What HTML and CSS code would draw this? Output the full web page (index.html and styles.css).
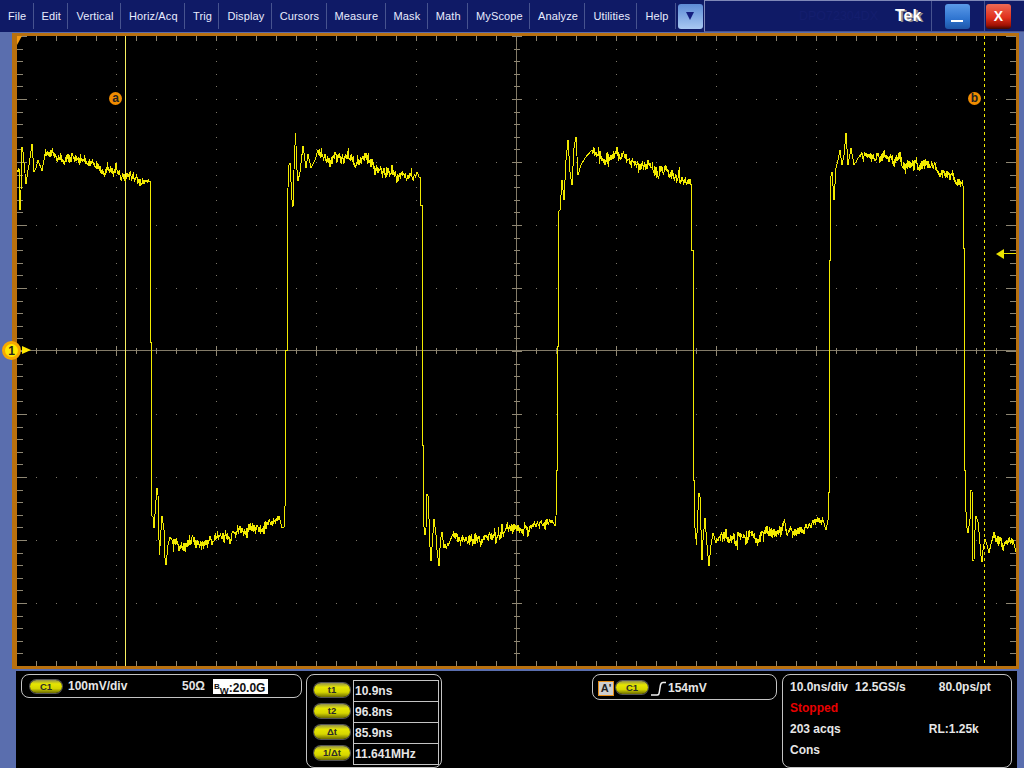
FILE: index.html
```html
<!DOCTYPE html>
<html lang="en">
<head>
    <meta charset="UTF-8">
    <title>Tek DPO72304DX</title>
    <link rel="stylesheet" href="styles.css">
</head>
<body>
    <header class="menubar">
        <ul class="menu">
            <li>File</li>
            <li>Edit</li>
            <li>Vertical</li>
            <li>Horiz/Acq</li>
            <li>Trig</li>
            <li>Display</li>
            <li>Cursors</li>
            <li>Measure</li>
            <li>Mask</li>
            <li>Math</li>
            <li>MyScope</li>
            <li>Analyze</li>
            <li>Utilities</li>
            <li>Help</li>
        </ul>
        <button class="winbtn btn-more"><span class="down-arrow"></span></button>
        <div class="titlebox">
            <span class="model">DPO72304DX</span>
            <span class="brand">Tek</span>
            <div class="winbtn-cell"><button class="winbtn btn-min"><span class="dash"></span></button></div>
            <div class="winbtn-cell last"><button class="winbtn btn-close">X</button></div>
        </div>
    </header>

    <main class="frame">
        <div class="plot">
            <svg id="scope" class="scope" width="999" height="630" viewBox="17 36 999 630"></svg>
            <span class="trig-pos"></span>
            <span class="cursor-tag tag-a">a</span>
            <span class="cursor-tag tag-b">b</span>
            <span class="ch-marker">1</span>
            <span class="ch-arrow"></span>
            <span class="level-arrow"></span>
            <span class="level-line"></span>
        </div>
    </main>

    <footer class="readouts">
        <section class="panel panel-vert">
            <span class="pill">C1</span>
            <span class="vert-scale">100mV/div</span>
            <span class="vert-term">50Ω</span>
            <span class="bw-box"><span class="bw-b">B</span><span class="bw-w">W</span>:20.0G</span>
        </section>

        <section class="panel panel-cursors">
            <div class="cursor-pills">
                <span class="pill pill-wide">t1</span>
                <span class="pill pill-wide">t2</span>
                <span class="pill pill-wide">Δt</span>
                <span class="pill pill-wide">1/Δt</span>
            </div>
            <table class="cursor-table">
                <tr><td>10.9ns</td></tr>
                <tr><td>96.8ns</td></tr>
                <tr><td>85.9ns</td></tr>
                <tr><td>11.641MHz</td></tr>
            </table>
        </section>

        <section class="panel panel-trig">
            <span class="trig-source">A'</span>
            <span class="pill">C1</span>
            <svg class="slope" width="16" height="16" viewBox="0 0 16 16">
                <path d="M0 14H6C8 14 8 13 8.500 10L9.500 4C10 2 10.500 1.500 12 1.500H15"/>
            </svg>
            <span class="trig-level">154mV</span>
        </section>

        <section class="panel panel-horiz">
            <div class="hz-row">
                <span>10.0ns/div</span>
                <span class="hz-rate">12.5GS/s</span>
                <span class="hz-pt">80.0ps/pt</span>
            </div>
            <div class="hz-row stopped">Stopped</div>
            <div class="hz-row">
                <span>203 acqs</span>
                <span class="hz-rl">RL:1.25k</span>
            </div>
            <div class="hz-row">Cons</div>
        </section>
    </footer>

    <script src="script.js"></script>
</body>
</html>
```

FILE: styles.css
```css
html, body {
    margin: 0;
    padding: 0;
}
body {
    width: 1024px;
    height: 768px;
    overflow: hidden;
    background: #5a6eae;
    font-family: "Liberation Sans", Arial, sans-serif;
    display: flex;
    flex-direction: column;
}

/* top menu */
.menubar {
    height: 32px;
    flex: none;
    background: #0f1a66;
    display: flex;
    align-items: center;
    color: #fff;
}
.menu {
    list-style: none;
    margin: 0;
    padding: 0;
    display: flex;
    align-items: center;
    font-size: 11px;
    letter-spacing: 0.12px;
    color: #e8ecff;
}
.menu li {
    height: 26px;
    line-height: 26px;
    padding: 0 6.400px 0 8px;
    border-right: 1px solid #47538f;
}
.winbtn {
    border: none;
    padding: 0;
    width: 25px;
    height: 25px;
    border-radius: 3px;
    display: flex;
    align-items: center;
    justify-content: center;
    flex: none;
}
.btn-more {
    margin-left: 2px;
    background: linear-gradient(#5d8bd6, #86ade6 55%, #a9c8f2);
}
.down-arrow {
    width: 0;
    height: 0;
    border-left: 4px solid transparent;
    border-right: 4px solid transparent;
    border-top: 8px solid #141f80;
}
.titlebox {
    margin-left: 1px;
    height: 32px;
    box-sizing: border-box;
    flex: 1;
    border-top: 1px solid #7f88b8;
    border-left: 1px solid #7f88b8;
    border-bottom: 1px solid #47538f;
    display: flex;
    align-items: center;
    position: relative;
}
.model {
    margin-left: 94px;
    width: 96px;
    font-size: 12.500px;
    color: #141e6e;
}
.brand {
    width: 36px;
    font-weight: bold;
    font-size: 16px;
    color: #fff;
    text-shadow: 2px 1px 0 #8a8a8a;
}
.winbtn-cell {
    height: 100%;
    width: 53px;
    box-sizing: border-box;
    border-left: 1px solid #47538f;
    display: flex;
    align-items: center;
    padding-left: 13px;
}
.winbtn-cell.last {
    padding-left: 1px;
    width: 39px;
}
.btn-min {
    background: linear-gradient(#5b9ae8, #2f74d0 60%, #1e56a8);
    align-items: flex-end;
    padding-bottom: 7px;
    box-sizing: border-box;
}
.dash {
    width: 12px;
    height: 2px;
    background: #fff;
}
.btn-close {
    background: linear-gradient(#ee6a55, #e0301c 55%, #a01204 85%, #400800);
    color: #fff;
    font-family: "Liberation Sans", Arial, sans-serif;
    font-size: 14px;
    font-weight: bold;
}

/* graticule */
.frame {
    margin: 1px 5px 0 12px;
    border-style: solid;
    border-color: #b8700f;
    border-width: 3px 3px 3px 5px;
    background: #000;
    flex: none;
}
.plot {
    position: relative;
    width: 999px;
    height: 630px;
}
.scope {
    display: block;
}
.trig-pos {
    position: absolute;
    left: 0;
    top: 0;
    width: 0;
    height: 0;
    border-top: 9px solid #f59a10;
    border-right: 5px solid transparent;
}
.cursor-tag {
    position: absolute;
    top: 56px;
    width: 13px;
    height: 13px;
    border-radius: 50%;
    background: #f08c00;
    color: #222;
    font-size: 12px;
    font-weight: bold;
    line-height: 12px;
    text-align: center;
}
.tag-a { left: 92px; }
.tag-b { left: 951px; }
.ch-marker {
    position: absolute;
    left: -15px;
    top: 305px;
    width: 13px;
    height: 13px;
    border: 3px solid #f7a800;
    border-radius: 50%;
    background: #ffe800;
    color: #222;
    font-size: 12px;
    font-weight: bold;
    line-height: 14px;
    text-align: center;
}
.ch-arrow {
    position: absolute;
    left: 5px;
    top: 310px;
    width: 0;
    height: 0;
    border-top: 4px solid transparent;
    border-bottom: 4px solid transparent;
    border-left: 9px solid #ffe800;
}
.level-arrow {
    position: absolute;
    left: 979px;
    top: 213px;
    width: 0;
    height: 0;
    border-top: 5px solid transparent;
    border-bottom: 5px solid transparent;
    border-right: 8px solid #ece400;
}
.level-line {
    position: absolute;
    left: 986px;
    top: 217px;
    width: 13px;
    height: 1px;
    background: #ece400;
}

/* readouts under the graticule */
.readouts {
    margin: 2px 7px 0 16px;
    padding: 3px 0 0 5px;
    flex: 1;
    background: #000;
    display: flex;
    align-items: flex-start;
    font-size: 12px;
    font-weight: bold;
    color: #e6e6e6;
}
.panel {
    box-sizing: border-box;
    border: 1px solid #c4c4c4;
    border-radius: 8px;
    flex: none;
}
.pill {
    display: block;
    box-sizing: border-box;
    width: 32px;
    height: 13px;
    border-radius: 7px;
    background: linear-gradient(#93934a, #e6e600 30%, #d6d600 65%, #6b6b00);
    box-shadow: 0 0 0 1px #555;
    color: #2a2a2a;
    font-size: 9.500px;
    font-weight: bold;
    line-height: 13px;
    text-align: center;
}
.panel-vert {
    width: 281px;
    height: 24px;
    display: flex;
    align-items: center;
    padding-left: 8px;
}
.vert-scale {
    width: 114px;
    margin-left: 6px;
}
.vert-term {
    width: 31px;
}
.bw-box {
    width: 55px;
    height: 15px;
    box-sizing: border-box;
    background: #fff;
    color: #111;
    line-height: 15px;
    white-space: nowrap;
    padding-left: 1px;
}
.bw-b {
    font-size: 8px;
    vertical-align: 3px;
}
.bw-w {
    font-size: 9.500px;
    vertical-align: -2px;
}
.panel-cursors {
    width: 136px;
    height: 94px;
    margin-left: 4px;
    padding: 5px 0 0 7px;
    display: flex;
}
.cursor-pills {
    width: 39px;
    padding-top: 3px;
    display: flex;
    flex-direction: column;
    gap: 7px;
}
.pill-wide {
    width: 36px;
    height: 14px;
    line-height: 14px;
}
.cursor-table {
    border-collapse: collapse;
    width: 86px;
    height: 85px;
}
.cursor-table td {
    border: 1px solid #c4c4c4;
    padding: 0 0 0 1px;
    height: 20px;
    line-height: 18px;
}
.panel-trig {
    width: 185px;
    height: 26px;
    margin-left: 150px;
    padding: 6px 0 0 5px;
    display: flex;
    align-items: flex-start;
}
.trig-source {
    box-sizing: border-box;
    width: 16px;
    height: 15px;
    border: 1px solid #e8901a;
    background: #cfcfcf;
    color: #222;
    font-size: 11px;
    line-height: 12px;
    text-align: center;
    margin-right: 2px;
}
.slope {
    margin-left: 3px;
    margin-top: 0;
}
.slope path {
    fill: none;
    stroke: #eee;
    stroke-width: 1.500;
}
.trig-level {
    margin-left: 1px;
    line-height: 14px;
}
.panel-horiz {
    width: 230px;
    height: 94px;
    margin-left: 5px;
    padding: 2px 0 0 7px;
}
.hz-row {
    height: 21px;
    line-height: 21px;
    display: flex;
}
.hz-rate {
    margin-left: 7px;
}
.hz-pt {
    margin-left: 33px;
}
.hz-rl {
    margin-left: 88px;
}
.stopped {
    color: #e80000;
}
```

FILE: script.js
```js
// draws the graticule and the captured trace; coordinates are page pixels
const svgNS = 'http://www.w3.org/2000/svg';
const scope = document.getElementById('scope');

const LEFT = 17, RIGHT = 1016, TOP = 36, BOTTOM = 666;
const STEP_X = 20, STEP_Y = 12.6;
const MID_X = 516.5, MID_Y = 350.5;

function addPath(d, cls, color, dash) {
    const p = document.createElementNS(svgNS, 'path');
    p.setAttribute('d', d);
    p.setAttribute('fill', 'none');
    p.setAttribute('stroke', color);
    p.setAttribute('shape-rendering', 'crispEdges');
    if (dash) p.setAttribute('stroke-dasharray', dash);
    p.setAttribute('class', cls);
    scope.appendChild(p);
}

function drawGrid() {
    let ticks = '';
    let dots = '';

    for (let i = 0; i <= 50; i++) {
        const x = 16.5 + i * STEP_X;
        const major = i % 5 === 0;
        ticks += `M${x} ${TOP}V${TOP + 5}M${x} ${BOTTOM - 5}V${BOTTOM}`;
        const t = major ? 5 : 3;
        ticks += `M${x} ${MID_Y - t}V${MID_Y + t}`;
        for (let k = 1; k < 10; k++) {
            if (k !== 5) dots += `M${x} ${TOP + k * 63 - 0.5}v1`;
        }
    }
    for (let j = 0; j <= 50; j++) {
        const y = Math.round(TOP + j * STEP_Y) + 0.5;
        const major = j % 5 === 0;
        const t = major ? 10 : 6;
        ticks += `M${LEFT} ${y}H${LEFT + t}M${RIGHT - t} ${y}H${RIGHT}`;
        const c = major ? 5 : 3;
        ticks += `M${MID_X - c} ${y}H${MID_X + c}`;
        for (let k = 1; k < 10; k++) {
            if (k !== 5) dots += `M${16.5 + k * 100} ${y - 0.5}v1`;
        }
    }
    addPath(dots, 'dots', '#7d7768');
    addPath(`M${LEFT} ${MID_Y}H${RIGHT}M${MID_X} ${TOP}V${BOTTOM}`, 'axes', '#837b68');
    addPath(ticks, 'ticks', '#8f8773');
}

// small repeatable random source, so the trace is the same on every load
let seed = 20240;
function rnd() {
    seed = (seed * 1664525 + 1013904223) % 4294967296;
    return seed / 4294967296 - 0.5;
}

// [x, y, noise]: noise is the amount of grass on the way to that point
const anchors = [
    [17, 170], [18, 172], [19, 168], [20, 210], [21, 190], [22, 147], [23, 152], [26, 184], [28, 170], [29, 165], [32, 144],
    [34, 172], [36, 168], [38, 160], [42, 171], [45, 154], [60, 160, 4], [80, 161, 4], [100, 166, 4], [120, 175, 4], [140, 179, 4], [149, 181, 2],
    [150, 181], [150, 342], [151.5, 342], [152, 516], [153, 517], [154, 528], [156, 500], [157, 488], [158, 495], [158.500, 525],
    [159.500, 555], [161, 530], [162, 516], [164, 530], [165, 558], [166, 565], [168, 545], [170, 537], [172, 540], [180, 546, 4],
    [200, 544, 5], [215, 539, 5], [235, 532, 5], [250, 530, 5], [270, 523, 4], [279, 516, 3], [282, 528], [284, 527], [285, 515],
    [285.500, 350], [287, 350], [287, 190], [288, 188], [288.500, 166], [290, 163], [292, 200], [293, 207], [294, 170], [295.500, 133],
    [297, 170], [298, 181], [300, 172], [303, 146], [306, 168], [308, 154], [311, 168], [315, 160], [318, 150], [330, 160, 4], [345, 157, 4],
    [355, 165, 4], [365, 158, 4], [380, 170, 5], [400, 175, 5], [419, 177, 3],
    [420.500, 177], [420.500, 205], [422, 205], [422, 445], [423.500, 445], [423.500, 523], [425, 535], [426, 528], [427, 494], [428.500, 497], [429.500, 540],
    [431, 561], [432.500, 540], [434, 519], [436, 535], [437, 550], [439, 566], [440.500, 540], [442, 532], [444, 548], [448, 546, 2], [452, 536], [460, 541, 4],
    [480, 541, 5], [490, 536, 4], [510, 531, 5], [530, 526, 5], [552, 520, 3], [555, 526], [556, 517],
    [556.500, 470], [557.500, 470], [557.500, 346], [558.500, 346], [558.500, 212], [560, 210], [562, 180], [564, 200], [566, 160], [568, 140],
    [570, 172], [572, 185], [574, 148], [576, 137], [578, 175], [581, 165], [585, 158], [592, 150], [605, 160, 4], [620, 158, 4], [640, 165, 4],
    [660, 172, 5], [680, 180, 4], [690, 183, 3],
    [691.500, 185], [691.500, 250], [693, 250], [693, 480], [694.500, 480], [694.500, 522], [696.500, 545], [698, 510], [699, 493], [700, 497], [701, 530], [702, 560],
    [703, 540], [705, 518], [707, 545], [709, 566], [711, 545], [713, 533], [716, 543], [720, 540, 2], [740, 536, 5], [760, 538, 5], [775, 531, 5], [790, 530, 5],
    [805, 527, 4], [823, 520, 3], [826, 530], [828, 520],
    [828, 492], [829.500, 492], [829.500, 260], [830.500, 260], [830.500, 178], [832, 172], [834, 200], [836, 168], [838, 160], [840, 150], [842, 165], [844, 155], [846, 133],
    [848, 165], [851, 148], [854, 165], [860, 155], [875, 160, 4], [890, 158, 4], [910, 162, 5], [930, 167, 4], [950, 176, 4], [962, 184, 3],
    [963, 186], [963, 248], [964.500, 248], [964.500, 470], [965.500, 470], [965.500, 498], [966.500, 525], [968, 533], [970, 520], [970.500, 490], [972, 490], [973, 560],
    [974, 560], [975, 530], [976, 516], [978, 522], [979, 532], [981, 556], [982, 562], [983, 550], [985, 539], [987, 545], [989, 553], [992, 540], [1000, 541, 4], [1008, 541, 4], [1013, 540, 3], [1016, 552]
];

function tracePath() {
    let d = `M${anchors[0][0]} ${anchors[0][1]}`;
    let slow = 0;
    for (let i = 1; i < anchors.length; i++) {
        const [x0, y0] = anchors[i - 1];
        const [x1, y1, noise] = anchors[i];
        if (noise) {
            for (let x = x0 + 0.4; x < x1; x += 0.4) {
                slow = slow * 0.85 + rnd() * noise * 1.1;
                let spike = rnd() * noise * 1.9;
                if (rnd() > 0.47) spike *= 3;
                const y = y0 + (y1 - y0) * (x - x0) / (x1 - x0) + slow + spike;
                d += `L${x.toFixed(1)} ${y.toFixed(1)}`;
            }
        }
        d += `L${x1} ${y1}`;
    }
    return d;
}

drawGrid();
addPath('M125.5 36V666', 'cursor-a', '#f8f060');
addPath('M984.5 36V666', 'cursor-b', '#f2ea00', '3 3');
addPath(tracePath(), 'trace', '#f2ea00');
```
